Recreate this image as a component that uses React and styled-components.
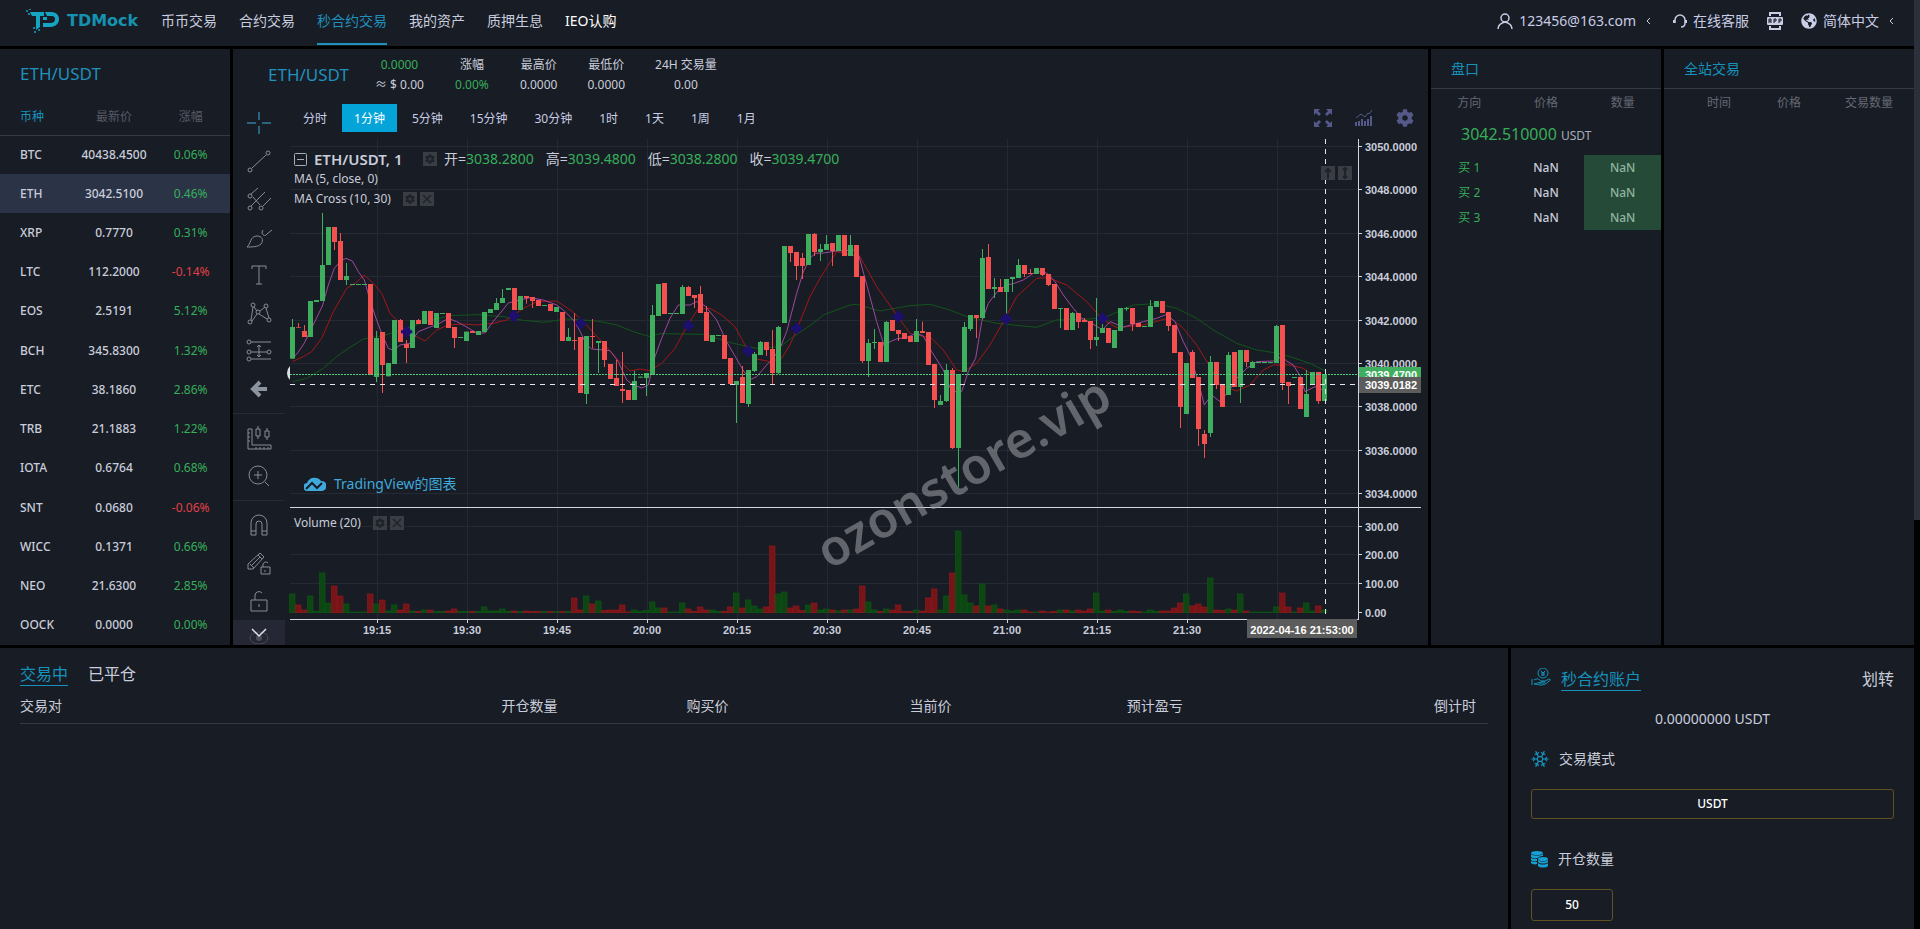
import React, { useState } from 'react'
import styled, { createGlobalStyle } from 'styled-components'
import { FaCog, FaGlobeAmericas } from 'react-icons/fa'
import { Snowflake } from 'lucide-react'

const navItems = ['币币交易', '合约交易', '秒合约交易', '我的资产', '质押生息', 'IEO认购']

const coins = [
    ['BTC', '40438.4500', '0.06%'],
    ['ETH', '3042.5100', '0.46%'],
    ['XRP', '0.7770', '0.31%'],
    ['LTC', '112.2000', '-0.14%'],
    ['EOS', '2.5191', '5.12%'],
    ['BCH', '345.8300', '1.32%'],
    ['ETC', '38.1860', '2.86%'],
    ['TRB', '21.1883', '1.22%'],
    ['IOTA', '0.6764', '0.68%'],
    ['SNT', '0.0680', '-0.06%'],
    ['WICC', '0.1371', '0.66%'],
    ['NEO', '21.6300', '2.85%'],
    ['OOCK', '0.0000', '0.00%'],
]

const stats = [
    { top: '0.0000', bottom: '≈ $ 0.00', topUp: true },
    { top: '涨幅', bottom: '0.00%', bottomUp: true },
    { top: '最高价', bottom: '0.0000' },
    { top: '最低价', bottom: '0.0000' },
    { top: '24H 交易量', bottom: '0.00' },
]

const intervals = ['分时', '1分钟', '5分钟', '15分钟', '30分钟', '1时', '1天', '1周', '1月']

// direction + body top, body bottom, (high, low); levels are thirds of a pixel
const candles = `g366,461,342,461 r366,368,354,368 r378,396,360,396 g288,396 g285,291 g180,288,24,288 g66,180 r66,111,66,135
r108,225,84,225 g213,225,174,240 g237,240 g237,240 g237,240 r237,510 g399,516,378,531 r381,480,381,564 g474,514 g345,477
r345,411,342,411 r417,429,405,474 g345,429 r345,357,342,357 g318,357 r318,360 g324,369 g324,327 r324,369 r366,399,366,429
g396,399 g380,408 r378,384 g378,390 g321,381 g312,324 g294,315,279,315 g279,294,252,294 g249,255 r249,315 g273,315
r273,279,273,296 r276,288,276,309 r285,303 g300,303 r297,318 g306,321 r321,408 g396,408,369,408 r405,408,324,435 r396,564
g393,567,393,597 r393,396,342,430 g408,414,408,504 r408,465,408,486 r477,522 r519,543,465,543 r552,558,441,594 r555,585
g528,585,498,585 g515,518 g504,519,504,573 g330,510,300,510 g237,333 r234,327 g324,327 g324,327 g246,327,240,327
r246,273,243,273 r270,279,270,309 r267,324,243,324 r321,408,303,408 g390,411 g390,393 r390,462 r459,537 g528,540,528,654
r516,594,483,594 g495,597,495,606 g447,498,441,501 g411,450,408,450 r411,435,411,453 r432,504,375,540 g366,504,363,507
g123,354 r123,144,123,171 r141,183,141,225 r159,183,144,222 g87,180 r87,141,84,153 g132,141,117,168 g117,135,90,135
r114,138,114,183 g90,138 r90,153 g120,153,90,153 r120,216 r213,468,213,474 g414,468,402,516 g411,414,372,432 r411,471
g351,471,348,471 r345,378 r375,387,375,408 r384,402 r393,411 g378,411,342,411 r378,384,350,384 r381,480 r477,585,477,609
g588,600,570,600 g495,588,477,591 r495,729,489,732 g507,729,507,847 g366,501,351,501 g330,372,330,378 r330,339,330,399
g159,339,132,342 r156,252,117,252 g246,252,219,279 r246,261,222,261 g222,261,222,345 g216,222,216,261 g180,219,162,219
r180,207,180,216 r204,207,192,207 g189,207 r189,210,189,213 r207,240,207,243 r237,312 g309,312,309,369 r309,375
g324,375,321,375 r324,351,324,369 r345,351,339,351 r348,405,348,432 g396,405,279,423 g369,384,354,384 r369,414 g375,429
g309,378 g309,312,306,318 r309,357,309,378 r354,366 g363,366 g303,366,285,366 g288,306 r288,324 r321,363,321,378 r360,444
r441,606,441,669 g474,627 r441,519,435,519 r516,672,516,723 r687,717,675,759 g471,684,453,696 r471,540,471,552 r537,606
g450,570,441,570 r441,546 g435,546,435,594 r435,471,435,486 g471,489,468,489 g471,474 g471,474 g471,474 g363,474,360,474
r360,534,360,555 r531,543,531,597 g516,519 r516,612 g567,636,495,636 g501,540 r501,588,501,597 g507,588`
    .split(/\s+/)
    .map((item) => {
        const [top, bottom, high = top, low = bottom] = item.slice(1).split(',').map(Number)
        return { up: item[0] === 'g', top, bottom, high, low }
    })

const volumes = [
    55, 22, 7, 49, 3, 118, 28, 79, 49, 25, 1, 1, 1, 55, 25, 37, 4, 22, 7, 25, 4, 2, 7, 7, 2, 2, 4, 10, 2, 2, 2, 2, 16, 4, 4, 10,
    3, 4, 3, 4, 2, 2, 2, 2, 2, 2, 2, 43, 7, 49, 25, 34, 5, 7, 7, 22, 1, 7, 2, 5, 31, 13, 13, 1, 1, 28, 10, 3, 16, 7, 7, 2, 3,
    16, 58, 13, 37, 19, 10, 16, 199, 55, 61, 13, 19, 5, 22, 28, 7, 10, 7, 4, 7, 7, 10, 79, 31, 7, 3, 10, 7, 22, 2, 2, 7, 4, 43,
    70, 7, 49, 118, 244, 52, 28, 19, 85, 19, 22, 10, 7, 4, 7, 7, 1, 1, 4, 1, 3, 7, 7, 4, 7, 4, 10, 58, 4, 7, 3, 7, 3, 4, 2, 1,
    7, 3, 4, 4, 13, 28, 55, 19, 25, 16, 103, 7, 5, 10, 7, 55, 4, 1, 1, 1, 1, 16, 58, 16, 1, 13, 28, 4, 19, 7,
]

const ma5 = '7,462 25,441 43,414 61,378 97,303 115,240 133,190 152,168 168,160 187,168 205,200 223,225 240,285 258,340 277,390 295,430 310,436 330,420 360,415 385,380 420,366 440,360 475,340 500,350 530,366 560,384 585,384 605,355 630,325 655,294 690,285 720,278 760,285 800,300 820,315 850,345 868,375 890,420 905,432 940,435 960,437 985,470 1010,525 1030,540 1055,549 1075,540 1095,455 1115,400 1140,340 1165,300 1200,300 1220,290 1245,302 1280,345 1310,410 1340,462 1365,505 1385,522 1400,515 1430,480 1448,462 1470,430 1490,380 1520,265 1540,200 1560,160 1575,145 1600,144 1640,138 1690,135 1706,150 1725,220 1760,350 1785,430 1800,410 1820,402 1850,397 1880,385 1900,393 1925,440 1960,495 1985,560 2015,560 2035,500 2057,460 2075,350 2095,295 2120,262 2150,240 2170,236 2200,225 2230,205 2245,200 2270,204 2295,230 2320,270 2350,310 2375,340 2400,352 2430,370 2440,372 2460,350 2500,366 2530,358 2560,350 2600,340 2630,328 2655,350 2680,410 2700,450 2725,530 2743,600 2765,570 2790,590 2815,560 2840,520 2870,490 2900,470 2950,468 2975,455 2990,468 3010,480 3030,512 3045,560 3075,545 3100,555'
const ma10 = '7,470 40,455 65,440 95,400 130,320 170,250 200,232 222,210 250,235 275,265 300,325 325,350 355,390 380,395 405,408 440,375 475,360 520,357 560,360 610,355 650,345 700,310 740,290 800,288 845,318 880,350 940,415 980,460 1020,498 1050,492 1080,497 1115,475 1155,430 1190,365 1225,310 1260,310 1295,330 1335,365 1365,420 1400,462 1440,470 1475,460 1500,420 1530,350 1560,275 1590,220 1640,140 1710,155 1760,245 1820,330 1860,385 1925,400 1960,435 2000,495 2020,500 2060,475 2100,420 2140,350 2180,275 2240,220 2275,218 2330,240 2390,290 2440,345 2480,368 2560,360 2640,338 2680,370 2720,420 2760,485 2790,540 2840,558 2880,540 2920,495 2950,480 3000,480 3040,490 3080,520 3105,520'
const ma30 = '7,530 50,520 100,490 140,455 180,427 220,402 280,392 320,380 400,352 480,332 560,329 640,335 700,346 760,352 830,342 920,348 980,360 1030,380 1080,395 1110,386 1240,388 1330,415 1400,430 1470,425 1510,395 1560,362 1600,330 1680,300 1700,298 1770,318 1860,302 1920,298 1980,315 2030,335 2120,355 2240,367 2300,345 2400,342 2450,335 2530,300 2600,296 2660,310 2720,340 2770,375 2840,415 2900,435 2960,444 3000,455 3060,475 3105,497'
const crosses = [[350, 380], [672, 333], [872, 355], [1195, 362], [1375, 438], [1520, 370], [1825, 335], [2148, 342], [2438, 340]]

const prices = [3050, 3048, 3046, 3044, 3042, 3040, 3038, 3036, 3034]
const priceY = (price) => Math.round(7 + (3050 - price) * 21.7) + 0.5
const times = ['19:15', '19:30', '19:45', '20:00', '20:15', '20:30', '20:45', '21:00', '21:15', '21:30', '21:45']

const Chart = () => (
    <ChartSvg viewBox="0 0 1143 506" role="img" aria-label="ETH/USDT">
        <g stroke="#242934">
            {prices.map((p) => <line key={p} x1="5" x2="1073" y1={priceY(p)} y2={priceY(p)} />)}
            {[387, 415, 444].map((y) => <line key={y} x1="5" x2="1073" y1={y + 0.5} y2={y + 0.5} />)}
            {times.map((t, i) => <line key={t} y1="0" y2="480" x1={92.5 + i * 90} x2={92.5 + i * 90} />)}
        </g>

        <g transform="translate(5 66) scale(0.33333)">
            {volumes.map((v, i) => (
                <rect key={i} x={18 * i - 1} y={1222 - v} width="16" height={v + 1} strokeWidth="2"
                    fill={candles[i].up ? '#0d4513' : '#761418'} stroke={candles[i].up ? '#0b5c14' : '#96191c'} />
            ))}
            <g fill="none" strokeWidth="3">
                <polyline points={ma30} stroke="#11551a" />
                <polyline points={ma10} stroke="#a3161a" />
                <polyline points={ma5} stroke="#a0479f" />
            </g>
            {candles.map((c, i) => (
                <g key={i} fill={c.up ? '#3fae5e' : '#f4504f'}>
                    <rect x={18 * i + 6} y={c.high} width="3" height={c.low - c.high} />
                    <rect x={18 * i} y={c.top} width="15" height={c.bottom - c.top} />
                </g>
            ))}
            <g stroke="#1c0f70" strokeWidth="9">
                {crosses.map(([x, y]) => (
                    <path key={x} d={`M${x - 17} ${y}h34M${x} ${y - 17}v34M${x - 9} ${y - 9}l18 18M${x + 9} ${y - 9}l-18 18`} />
                ))}
            </g>
        </g>

        <line x1="5" x2="1073" y1="235.5" y2="235.5" stroke="#4fd07a" strokeDasharray="2 1" />
        <line x1="5" x2="1073" y1="245.5" y2="245.5" stroke="#e4e6ee" strokeDasharray="5 5" />
        <line x1="1040.5" x2="1040.5" y1="0" y2="484" stroke="#e4e6ee" strokeDasharray="5 5" />
        <path d="M5 227q-3 3-3 7t3 7z" fill="#dfe1e8" />

        <g stroke="#d3d5e2">
            <line x1="5" x2="1136" y1="368.5" y2="368.5" />
            <line x1="5" x2="1074" y1="480.5" y2="480.5" />
            <line x1="1073.5" x2="1073.5" y1="0" y2="480" />
            {prices.map((p) => <line key={p} x1="1073" x2="1077" y1={priceY(p)} y2={priceY(p)} />)}
            {[387, 415, 444, 473].map((y) => <line key={y} x1="1073" x2="1077" y1={y + 0.5} y2={y + 0.5} />)}
            {times.slice(0, 10).map((t, i) => <line key={t} y1="480" y2="484" x1={92.5 + i * 90} x2={92.5 + i * 90} />)}
        </g>

        <AxisText>
            {prices.map((p) => <text key={p} x="1080" y={priceY(p) + 4}>{p.toFixed(4)}</text>)}
            {[300, 200, 100, 0].map((v, i) => <text key={v} x="1080" y={[392, 420, 449, 478][i]}>{v.toFixed(2)}</text>)}
            {times.slice(0, 10).map((t, i) => <text key={t} x={92 + i * 90} y="495" textAnchor="middle">{t}</text>)}
            <rect x="1074" y="228" width="62" height="15" fill="#3fae5e" />
            <text className="tag" x="1080" y="240">3039.4700</text>
            <rect x="1074" y="238" width="62" height="16" fill="#5c5c5c" />
            <text className="tag" x="1080" y="250">3039.0182</text>
            <rect x="962" y="480" width="110" height="19" fill="#5c5c5c" />
            <text className="tag" x="1017" y="495" textAnchor="middle">2022-04-16 21:53:00</text>
        </AxisText>

        <Watermark x="679" y="351" textAnchor="middle" transform="rotate(-30 679 335)">ozonstore.vip</Watermark>
    </ChartSvg>
)

const drawingTools = [
    { name: '十字线', active: true, art: <path d="M14 3v8M14 17v8M2 14h9M17 14h9" /> },
    { name: '趋势线', art: <><circle cx="5" cy="23" r="2" /><circle cx="23" cy="6" r="2" /><path d="M7 21L21 8" /></> },
    { name: '叉子', art: <><circle cx="5" cy="11" r="2" /><circle cx="5" cy="23" r="2" /><circle cx="16" cy="23" r="2" /><path d="M6 9l7-6M6 21L20 7M8 12l7 8M18 21l8-8" /></> },
    { name: '画笔', art: <path d="M2 24c4-3 3-11 10-11 5 0 7 4 4 8-3 3-9 3-14 3zM17 9c0 3 3 5 5 2l5-4M17 9l1-2" /> },
    { name: '文本', art: <path d="M7 8V5h14v3M14 5v18M11 23h6" /> },
    { name: '形态', art: <><circle cx="5" cy="23" r="2" /><circle cx="8" cy="6" r="2" /><circle cx="13" cy="13" r="2" /><circle cx="21" cy="7" r="2" /><circle cx="24" cy="21" r="2" /><path d="M6 21L8 8M9 8l3 4M15 12l5-4M21 9l3 10M7 22l5-7M14 15l8 5" /></> },
    { name: '预测', art: <><circle cx="4" cy="5" r="2" /><circle cx="4" cy="15" r="2" /><circle cx="4" cy="22" r="2" /><circle cx="24" cy="15" r="2" /><path d="M6 5h20M6 15h16M6 22h20M14 8v11M12 10l2-2 2 2M12 18l2 2 2-2" /></> },
    { name: '箭头', art: <path d="M22 14H9M15 7l-7 7 7 7" strokeWidth="4" stroke="#8b949f" /> },
]
const measureTools = [
    { name: '测量', art: <><path d="M3 5h4v16h19v4H3zM3 9h2M3 13h2M3 17h2M11 25v-2M15 25v-2M19 25v-2M23 25v-2" /><path d="M11 5h4v7h-4zM13 2v3M13 12v3M20 7h4v6h-4zM22 4v3M22 13v3" /></> },
    { name: '放大', art: <><circle cx="13" cy="13" r="9" /><path d="M20 20l4 4M13 9v8M9 13h8" /></> },
]
const lockTools = [
    { name: '磁铁', art: <path d="M6 24V12a8 8 0 0116 0v12h-5V13a3 3 0 00-6 0v11zM6 20h5M17 20h5" /> },
    { name: '保持绘图', art: <path d="M3 20v-5L15 4l4 4L8 20zM5 15l4 4M13 6l4 4M7 16l8-8M16 18h9v7h-9zM18 18v-3a3 3 0 015-1M20 21v2" /> },
    { name: '锁定', art: <path d="M6 13h16v11H6zM10 13V8a4 4 0 017-2M14 17v3" /> },
]

const ToolGroup = ({ items }) => (
    <ToolList>
        {items.map((t) => (
            <ToolButton key={t.name} aria-label={t.name} $active={t.active}>
                <svg viewBox="0 0 28 28" width="28" height="28">{t.art}</svg>
            </ToolButton>
        ))}
    </ToolList>
)

const Header = () => (
    <HeaderBar>
        <Logo href="#">
            <svg viewBox="0 0 34 24" width="34" height="24">
                <path d="M4 3h14v4h-4v11l-4 3V7H6zM17 8h4v3h-4zM19 3h6c5 0 8 3 8 7s-3 8-9 8h-7v-4h7c3 0 5-1 5-4s-2-3-5-3h-3z" fill="#15a5c2" />
                <path d="M0 1h2v2H0zM3 0h2v1H3zM2 4h2v2H2zM8 22h2v2H8zM7 18h2v2H7zM12 20h2v2h-2z" fill="#1583a0" />
            </svg>
            <span>TDMock</span>
        </Logo>
        <Nav>
            {navItems.map((item, i) => (
                <NavLink key={item} href="#" $active={i === 2} $bright={i === 5}>{item}</NavLink>
            ))}
        </Nav>
        <UserMenu>
            <MenuItem href="#">
                <svg viewBox="0 0 16 17" width="16" height="17" fill="none" stroke="currentColor" strokeWidth="1.5">
                    <circle cx="8" cy="5" r="4" /><path d="M1 16c0-4 3-6 7-7 4 1 7 3 7 7" />
                </svg>
                123456@163.com
                <Chevron />
            </MenuItem>
            <MenuItem href="#">
                <svg viewBox="0 0 14 14" width="14" height="14" fill="none" stroke="currentColor" strokeWidth="1.5">
                    <path d="M2 9V6a5 5 0 0110 0v3c0 2-1 4-4 4" /><path d="M1 6v3M13 6v3" strokeWidth="2" />
                </svg>
                在线客服
            </MenuItem>
            <MenuItem href="#" aria-label="APP">
                <svg viewBox="0 0 16 18" width="16" height="18" fill="currentColor">
                    <path d="M2 0h12v4h-2V2H4v2H2zM2 14h2v2h8v-2h2v4H2z" /><rect y="5" width="16" height="8" rx="1" />
                    <path d="M2 11V7h2v4M2 9h2M7 11V7h2v2H7M12 11V7h2v2h-2" stroke="#181c24" fill="none" />
                </svg>
            </MenuItem>
            <MenuItem href="#">
                <FaGlobeAmericas size={16} />
                简体中文
                <Chevron />
            </MenuItem>
        </UserMenu>
    </HeaderBar>
)

const Chevron = () => (
    <ChevronSvg viewBox="0 0 5 8" width="5" height="8"><path d="M4 1L1 4l3 3" /></ChevronSvg>
)

const SmallGear = () => <SmallButton aria-label="设置"><FaCog size={10} /></SmallButton>
const SmallClose = () => (
    <SmallButton aria-label="移除">
        <svg viewBox="0 0 10 10" width="10" height="10"><path d="M1 1l8 8M9 1L1 9" stroke="currentColor" strokeWidth="1.5" /></svg>
    </SmallButton>
)
const SmallArrow = ({ d, label }) => (
    <SmallButton aria-label={label}>
        <svg viewBox="0 0 10 12" width="10" height="12"><path d={d} stroke="currentColor" strokeWidth="2" fill="none" /></svg>
    </SmallButton>
)

const App = () => {
    const [interval, setActive] = useState('1分钟')
    const [coin, setCoin] = useState('ETH')

    return (
        <>
            <GlobalStyle />
            <Page>
                <Main>
                    <Header />
                    <TopGrid>
                        <Panel>
                            <PairTitle>ETH/USDT</PairTitle>
                            <CoinTable>
                                <thead>
                                    <tr><th>币种</th><th>最新价</th><th>涨幅</th></tr>
                                </thead>
                                <tbody>
                                    {coins.map(([name, price, change]) => (
                                        <CoinRow key={name} $active={name === coin} $down={change[0] === '-'} onClick={() => setCoin(name)}>
                                            <td>{name}</td><td>{price}</td><td>{change}</td>
                                        </CoinRow>
                                    ))}
                                </tbody>
                            </CoinTable>
                        </Panel>

                        <Panel>
                            <InfoBar>
                                <InfoPair>ETH/USDT</InfoPair>
                                {stats.map((s) => (
                                    <Stat key={s.top}>
                                        <StatLine $up={s.topUp}>{s.top}</StatLine>
                                        <StatLine $up={s.bottomUp}>{s.bottom}</StatLine>
                                    </Stat>
                                ))}
                            </InfoBar>
                            <ChartArea>
                                <Tools>
                                    <ToolGroup items={drawingTools} />
                                    <ToolGroup items={measureTools} />
                                    <ToolGroup items={lockTools} />
                                    <MoreTools aria-label="更多">
                                        <svg viewBox="0 0 20 20" width="20" height="20" fill="none">
                                            <ellipse cx="10" cy="14" rx="9" ry="6" stroke="#4b4d58" /><circle cx="10" cy="14" r="3" fill="#4b4d58" />
                                            <path d="M3 5l7 7 7-7" stroke="#dfe2ea" strokeWidth="1.5" />
                                        </svg>
                                    </MoreTools>
                                </Tools>
                                <ChartColumn>
                                    <IntervalBar>
                                        {intervals.map((item) => (
                                            <IntervalButton key={item} $active={item === interval} onClick={() => setActive(item)}>{item}</IntervalButton>
                                        ))}
                                        <ChartActions>
                                            <button aria-label="全屏">
                                                <svg viewBox="0 0 18 18" width="18" height="18" fill="currentColor">
                                                    <path d="M0 0h6L4 2l3 3-2 2-3-3-2 2zM18 0v6l-2-2-3 3-2-2 3-3-2-2zM0 18v-6l2 2 3-3 2 2-3 3 2 2zM18 18h-6l2-2-3-3 2-2 3 3 2-2z" />
                                                </svg>
                                            </button>
                                            <button aria-label="指标">
                                                <svg viewBox="0 0 18 16" width="18" height="16">
                                                    <path d="M1 16v-4M4 16v-5M7 16v-7M10 16v-5M13 16V9M16 16V6" stroke="currentColor" strokeWidth="2" />
                                                    <path d="M1 8l5-4 4 3 3-4 1 1 3-4" stroke="currentColor" fill="none" />
                                                </svg>
                                            </button>
                                            <button aria-label="设置"><FaCog size={18} /></button>
                                        </ChartActions>
                                    </IntervalBar>
                                    <ChartBox>
                                        <Chart />
                                        <Legend>
                                            <LegendTitle>
                                                <svg viewBox="0 0 13 13" width="13" height="13" fill="none" stroke="#a9adb9">
                                                    <rect x="0.5" y="0.5" width="12" height="12" rx="1" /><path d="M3 6.5h7" />
                                                </svg>
                                                <strong>ETH/USDT, 1</strong>
                                                <SmallGear />
                                                <Ohlc>
                                                    <span>开=<b>3038.2800</b></span>
                                                    <span>高=<b>3039.4800</b></span>
                                                    <span>低=<b>3038.2800</b></span>
                                                    <span>收=<b>3039.4700</b></span>
                                                </Ohlc>
                                            </LegendTitle>
                                            <LegendRow>MA (5, close, 0)</LegendRow>
                                            <LegendRow>MA Cross (10, 30) <ButtonPair><SmallGear /><SmallClose /></ButtonPair></LegendRow>
                                        </Legend>
                                        <PaneButtons>
                                            <SmallArrow label="上移" d="M5 12V2M2 5l3-3 3 3" />
                                            <SmallArrow label="最大化" d="M5 1v10M3 3l2-2 2 2M3 9l2 2 2-2" />
                                        </PaneButtons>
                                        <Brand href="#">
                                            <svg viewBox="0 0 22 14" width="22" height="14">
                                                <path d="M4 14a4 4 0 01-1-8A8 8 0 0117 4a5 5 0 011 10z" fill="#3fa9dc" />
                                                <path d="M2 12l6-6 5 5 5-5" stroke="#181c24" strokeWidth="2" fill="none" />
                                            </svg>
                                            TradingView的图表
                                        </Brand>
                                        <VolumeLegend>Volume (20) <ButtonPair><SmallGear /><SmallClose /></ButtonPair></VolumeLegend>
                                    </ChartBox>
                                </ChartColumn>
                            </ChartArea>
                        </Panel>

                        <Panel>
                            <PanelTitle>盘口</PanelTitle>
                            <BookHead><span>方向</span><span>价格</span><span>数量</span></BookHead>
                            <LastPrice>3042.510000 <small>USDT</small></LastPrice>
                            {[1, 2, 3].map((n) => (
                                <BookRow key={n}><span>买 {n}</span><span>NaN</span><span>NaN</span></BookRow>
                            ))}
                        </Panel>

                        <Panel>
                            <PanelTitle>全站交易</PanelTitle>
                            <TradesHead><span>时间</span><span>价格</span><span>交易数量</span></TradesHead>
                        </Panel>
                    </TopGrid>

                    <BottomGrid>
                        <OrdersPanel>
                            <Tabs>
                                <TabButton $active>交易中</TabButton>
                                <TabButton>已平仓</TabButton>
                            </Tabs>
                            <OrdersTable>
                                <thead>
                                    <tr>
                                        <th>交易对</th><th>开仓数量</th><th>购买价</th><th>当前价</th><th>预计盈亏</th><th>倒计时</th>
                                    </tr>
                                </thead>
                            </OrdersTable>
                        </OrdersPanel>
                        <AccountPanel>
                            <AccountHead>
                                <svg viewBox="0 0 20 18" width="20" height="18" fill="none" stroke="#1593bd">
                                    <circle cx="12" cy="5" r="5" />
                                    <path d="M10 3l2 2 2-2M12 5v3M10 5h4M10 7h4" />
                                    <path d="M1 11v6M3 12c3-2 5-1 7 1h3c1 0 1 2 0 2H8M14 13l4-2c2 0 1 2 0 2-3 3-5 4-8 4-3 0-4-1-7-1z" />
                                </svg>
                                <AccountLink href="#">秒合约账户</AccountLink>
                                <TransferButton>划转</TransferButton>
                            </AccountHead>
                            <Balance>0.00000000 USDT</Balance>
                            <FieldLabel><Snowflake size={18} viewBox="1 1 22 22" strokeWidth={1.5} color="#1593bd" />交易模式</FieldLabel>
                            <OptionButton>USDT</OptionButton>
                            <FieldLabel>
                                <svg viewBox="0 0 17 17" width="17" height="17" fill="#17a0d4">
                                    <ellipse cx="6" cy="2" rx="6" ry="2" />
                                    <path d="M0 3c2 2 10 2 12 0v2c-3 0-5 1-5 2-3 1-6 0-7-1zM0 7c2 1 4 1 6 1v2c-2 1-5 0-6-1zM0 10c2 1 4 1 6 1v2c-2 1-5 0-6-1z" />
                                    <ellipse cx="12" cy="8" rx="5" ry="2" />
                                    <path d="M7 9c2 2 8 2 10 0v2c-2 2-8 2-10 0zM7 12c2 2 8 2 10 0v3c-2 2-8 2-10 0z" />
                                </svg>
                                开仓数量
                            </FieldLabel>
                            <OptionButton $small>50</OptionButton>
                        </AccountPanel>
                    </BottomGrid>
                </Main>
                <ScrollTrack><ScrollThumb /></ScrollTrack>
            </Page>
        </>
    )
}

export default App

const GlobalStyle = createGlobalStyle`
    * {
        box-sizing: border-box;
    }

    body {
        margin: 0;
        background-color: #000;
        color: #c9cddb;
        font-family: "Noto Sans", "Noto Sans CJK SC", sans-serif;
        font-size: 12px;
        line-height: 20px;
    }

    button {
        font: inherit;
        color: inherit;
        background: none;
        border: none;
        padding: 0;
        cursor: pointer;
    }

    a {
        color: inherit;
        text-decoration: none;
    }

    svg {
        flex-shrink: 0;
    }
`

const Page = styled.div`
    display: grid;
    grid-template-columns: minmax(0, 1fr) 6px;
    grid-template-rows: 100vh;
    overflow: hidden;
`
const Main = styled.main`
    display: flex;
    flex-direction: column;
    gap: 3px;
    min-width: 0;
`
const ScrollTrack = styled.div`
    background-color: #000;
`
const ScrollThumb = styled.div`
    height: 56%;
    background-color: #2b303b;
`

const HeaderBar = styled.header`
    display: flex;
    align-items: center;
    height: 46px;
    flex-shrink: 0;
    padding: 0 16px 0 26px;
    background-color: #181c24;
    font-size: 14px;
`
const Logo = styled.a`
    display: flex;
    align-items: center;
    gap: 7px;
    width: 135px;
    height: 42px;
    align-self: flex-start;
    color: #1592b0;
    font-family: "DejaVu Sans", sans-serif;
    font-weight: 700;
    font-size: 16px;
`
const Nav = styled.nav`
    display: flex;
    gap: 22px;
    flex: 1;
`
const NavLink = styled.a`
    height: 46px;
    line-height: 42px;
    white-space: nowrap;
    color: ${(props) => props.$active ? '#2090bd' : props.$bright ? '#fff' : '#c9cddf'};
    box-shadow: ${(props) => props.$active ? 'inset 0 -1px #181c24, inset 0 -3px #2090bd' : 'none'};
`
const UserMenu = styled.div`
    display: flex;
    align-items: center;
    gap: 18px;
    height: 42px;
    align-self: flex-start;
`
const MenuItem = styled.a`
    display: flex;
    align-items: center;
    gap: 6px;
    white-space: nowrap;
    color: #c9cde6;
`
const ChevronSvg = styled.svg`
    margin: 0 4px;
    fill: none;
    stroke: currentColor;
`

const TopGrid = styled.div`
    display: grid;
    grid-template-columns: 230px minmax(0, 1fr) 230px 250px;
    gap: 3px;
`
const Panel = styled.section`
    display: flex;
    flex-direction: column;
    min-width: 0;
    background-color: #181c24;
`
const PairTitle = styled.div`
    padding: 15px 20px;
    font-size: 17px;
    color: #2090bd;
`

const CoinTable = styled.table`
    flex: 1;
    width: 100%;
    border-collapse: collapse;
    table-layout: fixed;
    text-align: center;

    th {
        height: 36px;
        padding: 0 2px 0 0;
        font-weight: 400;
        color: #565b67;
        border-bottom: 1px solid #343943;
    }

    th:first-child, td:first-child {
        padding-left: 20px;
        text-align: left;
    }

    th:first-child {
        color: #1593bd;
    }

    td {
        height: 39px;
        padding: 0 2px 0 0;
        font-weight: 500;
    }
`
const CoinRow = styled.tr`
    cursor: pointer;
    background-color: ${(props) => props.$active ? '#2b3347' : 'transparent'};

    td:last-child {
        font-weight: 400;
        color: ${(props) => props.$down ? '#e04048' : '#37ae5b'};
    }
`

const InfoBar = styled.div`
    display: flex;
    align-items: center;
    gap: 30px;
    height: 55px;
    padding-left: 35px;
    padding-bottom: 4px;
`
const InfoPair = styled.div`
    width: 77px;
    font-size: 17px;
    color: #2090bd;
`
const Stat = styled.div`
    text-align: center;
    min-width: 36px;
`
const StatLine = styled.div`
    white-space: nowrap;
    color: ${(props) => props.$up ? '#37ae5b' : '#c9cddb'};
`

const ChartArea = styled.div`
    display: flex;
`
const Tools = styled.div`
    display: flex;
    flex-direction: column;
    width: 52px;
    flex-shrink: 0;
`
const ToolList = styled.div`
    display: flex;
    flex-direction: column;

    & + & {
        margin-top: 5px;
        padding-top: 5px;
        border-top: 1px solid #262b34;
    }
`
const ToolButton = styled.button`
    display: flex;
    align-items: center;
    justify-content: center;
    height: 38px;

    svg {
        fill: none;
        stroke: ${(props) => props.$active ? '#3fa9dc' : '#878c96'};
    }
`
const MoreTools = styled.button`
    display: flex;
    justify-content: center;
    flex: 1;
    height: 24px;
    padding-top: 4px;
    background-color: #252834;
`
const ChartColumn = styled.div`
    flex: 1;
    min-width: 0;
`
const IntervalBar = styled.div`
    display: flex;
    gap: 3px;
    height: 35px;
    padding: 0 14px 7px 6px;
`
const IntervalButton = styled.button`
    height: 28px;
    padding: 2px 12px 0;
    white-space: nowrap;
    color: ${(props) => props.$active ? '#fff' : '#c9cde6'};
    background-color: ${(props) => props.$active ? '#04a3d8' : 'transparent'};
`
const ChartActions = styled.div`
    display: flex;
    align-items: center;
    gap: 23px;
    margin-left: auto;
    color: #54598a;

    button {
        display: flex;
    }
`
const ChartBox = styled.div`
    position: relative;
`
const ChartSvg = styled.svg`
    display: block;
    width: 100%;
    height: auto;
`
const AxisText = styled.g`
    font-family: "Liberation Sans", Arial, sans-serif;
    font-size: 11px;
    font-weight: 700;
    fill: #c9cddb;

    .tag {
        fill: #fff;
    }
`
const Watermark = styled.text`
    font-size: 50px;
    font-weight: 600;
    fill: rgba(160, 162, 168, 0.55);
`
const Legend = styled.div`
    position: absolute;
    top: 10px;
    left: 9px;
`
const LegendTitle = styled.div`
    display: flex;
    align-items: center;
    gap: 7px;
    font-size: 14px;

    strong {
        width: 102px;
        font-size: 15px;
        font-weight: 600;
    }
`
const Ohlc = styled.div`
    display: flex;
    gap: 12px;

    b {
        font-weight: 400;
        color: #37ae5b;
    }
`
const LegendRow = styled.div`
    display: flex;
    align-items: center;
    gap: 12px;
`
const ButtonPair = styled.span`
    display: flex;
    gap: 3px;
`
const SmallButton = styled.button`
    display: flex;
    align-items: center;
    justify-content: center;
    width: 14px;
    height: 14px;
    color: #1e2229;
    background-color: #3a3d44;
`
const PaneButtons = styled.div`
    position: absolute;
    top: 27px;
    right: 76px;
    display: flex;
    gap: 3px;
`
const Brand = styled.a`
    position: absolute;
    top: 335px;
    left: 19px;
    display: flex;
    align-items: center;
    gap: 8px;
    font-size: 14px;
    color: #3fa9dc;
`
const VolumeLegend = styled(LegendRow)`
    position: absolute;
    top: 374px;
    left: 9px;
`

const PanelTitle = styled.div`
    height: 40px;
    padding-left: 20px;
    line-height: 40px;
    font-size: 14px;
    color: #1593bd;
    border-bottom: 1px solid #343943;
`
const BookHead = styled.div`
    display: grid;
    grid-template-columns: repeat(3, 1fr);
    padding: 4px 0;
    text-align: center;
    color: #646975;
`
const TradesHead = styled(BookHead)`
    grid-template-columns: 7fr 7fr 9fr;
    padding-left: 20px;
`
const LastPrice = styled.div`
    height: 38px;
    padding: 7px 30px;
    font-size: 16px;
    color: #37ae5b;

    small {
        font-size: 12px;
        color: #a9adb9;
    }
`
const BookRow = styled.div`
    display: grid;
    grid-template-columns: repeat(3, 1fr);
    line-height: 25px;
    text-align: center;
    font-weight: 500;

    span:first-child {
        font-weight: 400;
        color: #37ae5b;
    }

    span:last-child {
        color: #8fb5a0;
        background-color: #254a37;
    }
`

const BottomGrid = styled.div`
    display: grid;
    grid-template-columns: minmax(0, 1fr) 403px;
    gap: 3px;
    flex: 1;
`
const OrdersPanel = styled(Panel)`
    padding: 16px 20px;
`
const Tabs = styled.div`
    display: flex;
    gap: 20px;
`
const TabButton = styled.button`
    height: 22px;
    font-size: 16px;
    line-height: 21px;
    color: ${(props) => props.$active ? '#1593bd' : '#c9cddb'};
    border-bottom: 1px solid ${(props) => props.$active ? '#1593bd' : 'transparent'};
`
const OrdersTable = styled.table`
    width: 100%;
    margin-top: 4px;
    border-collapse: collapse;
    table-layout: fixed;
    font-size: 14px;
    text-align: left;

    th {
        height: 33px;
        padding: 0;
        font-weight: 400;
        border-bottom: 1px solid #343943;
    }

    th:nth-child(1) {
        width: 32.8%;
    }

    th:nth-child(2) {
        width: 12.6%;
    }

    th:nth-child(3) {
        width: 15.2%;
    }

    th:nth-child(4) {
        width: 14.8%;
    }

    th:last-child {
        padding-right: 12px;
        text-align: right;
    }
`
const AccountPanel = styled(Panel)`
    padding: 20px 20px 0;
`
const AccountHead = styled.div`
    display: flex;
    align-items: flex-start;
    gap: 10px;
    font-size: 16px;
`
const AccountLink = styled.a`
    height: 23px;
    line-height: 23px;
    color: #1593bd;
    border-bottom: 1px solid #1593bd;
`
const TransferButton = styled.button`
    margin-left: auto;
    line-height: 23px;
`
const Balance = styled.div`
    margin: 18px 0 20px;
    font-size: 14px;
    text-align: center;
`
const FieldLabel = styled.div`
    display: flex;
    align-items: center;
    gap: 10px;
    margin-bottom: 20px;
    font-size: 14px;
`
const OptionButton = styled.button`
    width: ${(props) => props.$small ? '82px' : '100%'};
    height: ${(props) => props.$small ? '32px' : '30px'};
    margin-bottom: 30px;
    font-weight: 500;
    color: #fff;
    border: 1px solid #5f5222;
    border-radius: 3px;
`
